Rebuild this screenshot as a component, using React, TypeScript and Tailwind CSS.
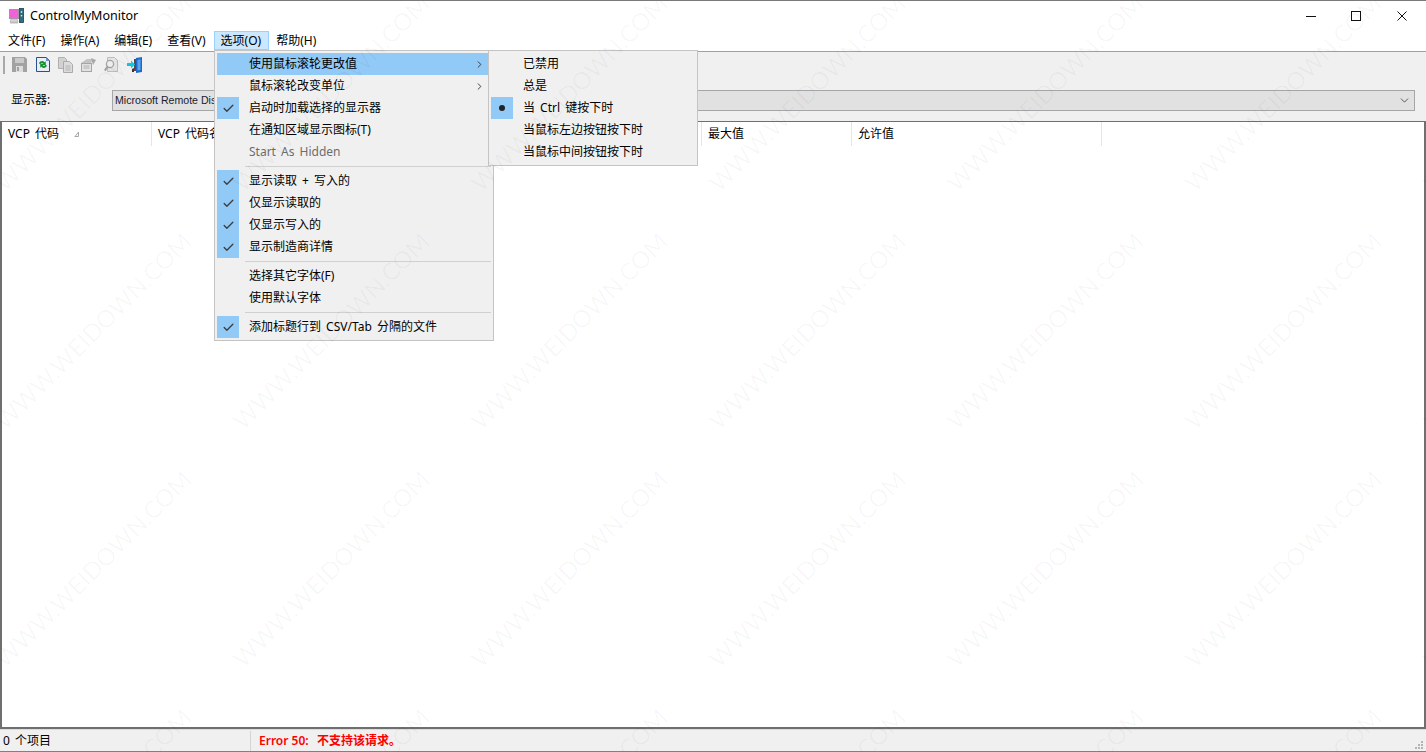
import type { ReactNode } from "react";
import { Check, ChevronRight, ChevronDown } from "lucide-react";

const menuBar = ["文件(F)", "操作(A)", "编辑(E)", "查看(V)", "选项(O)", "帮助(H)"];

const columns = [
  { label: "VCP 代码", width: "w-[150px]" },
  { label: "VCP 代码名称", width: "w-[150px]" },
  { label: "读写", width: "w-[150px]" },
  { label: "当前值", width: "w-[100px]" },
  { label: "最小值", width: "w-[150px]" },
  { label: "最大值", width: "w-[150px]" },
  { label: "允许值", width: "w-[250px]" },
];

const watermarkRows = [93, 331, 569, 807];
const watermarkCols = [93, 331, 569, 807, 1045, 1283, 1521];

function MenuRow({
  label,
  mark,
  arrow,
  active,
  disabled,
}: {
  label: string;
  mark?: "check" | "dot";
  arrow?: boolean;
  active?: boolean;
  disabled?: boolean;
}) {
  return (
    <div className={`flex h-[22px] items-center ${active ? "bg-[#91c9f7]" : ""}`}>
      <div className={`flex h-[22px] w-[22px] shrink-0 items-center justify-center ${mark ? "bg-[#91c9f7]" : ""}`}>
        {mark === "check" && <Check size={13} strokeWidth={2.4} className="text-[#3c3c3c]" />}
        {mark === "dot" && <div className="h-[6px] w-[6px] rounded-full bg-[#222222]" />}
      </div>
      <span className={`flex-1 whitespace-pre pl-[10px] [word-spacing:2px] ${disabled ? "text-[#6d6d6d]" : "text-black"}`}>{label}</span>
      {arrow && <ChevronRight size={11} strokeWidth={2} className="mr-[3px] text-[#333333]" />}
    </div>
  );
}

function Separator() {
  return (
    <div className="flex h-[7px] items-center pl-[28px]">
      <div className="h-px w-[246px] shrink-0 bg-[#d0d0d0]" />
    </div>
  );
}

function OptionsMenu() {
  return (
    <div className="absolute left-[214px] top-[49px] z-10 h-[291px] w-[280px] border border-[#c4c4c4] bg-[#f0f0f0] pl-[2px] pr-[5px] pt-[2px]">
      <MenuRow label="使用鼠标滚轮更改值" arrow active />
      <MenuRow label="鼠标滚轮改变单位" arrow />
      <MenuRow label="启动时加载选择的显示器" mark="check" />
      <MenuRow label="在通知区域显示图标(T)" />
      <MenuRow label="Start As Hidden" disabled />
      <Separator />
      <MenuRow label="显示读取 + 写入的" mark="check" />
      <MenuRow label="仅显示读取的" mark="check" />
      <MenuRow label="仅显示写入的" mark="check" />
      <MenuRow label="显示制造商详情" mark="check" />
      <Separator />
      <MenuRow label="选择其它字体(F)" />
      <MenuRow label="使用默认字体" />
      <Separator />
      <MenuRow label="添加标题行到 CSV/Tab 分隔的文件" mark="check" />
    </div>
  );
}

function WheelSubmenu() {
  return (
    <div className="absolute left-[488px] top-[49px] z-20 h-[116px] w-[210px] border border-[#c4c4c4] bg-[#f0f0f0] pl-[2px] pt-[2px]">
      <MenuRow label="已禁用" />
      <MenuRow label="总是" />
      <MenuRow label="当 Ctrl 键按下时" mark="dot" />
      <MenuRow label="当鼠标左边按钮按下时" />
      <MenuRow label="当鼠标中间按钮按下时" />
    </div>
  );
}

function ToolIcon({ children }: { children: ReactNode }) {
  return <div className="flex h-[18px] w-[23px] items-center justify-center">{children}</div>;
}

function AppIcon() {
  return (
    <svg width="15" height="16" viewBox="0 0 15 16">
      <rect x=".5" y="1.5" width="9" height="9" fill="#f062d8" stroke="#a88fa5" />
      <path d="M2 11h6l1 3H1z" fill="#d8d8d8" stroke="#a8a8a8" strokeWidth="0.6" />
      <path d="M1 14h8v1.5H1z" fill="#bcbcbc" />
      <rect x="10.5" y=".5" width="4" height="14" fill="#2f6f7d" stroke="#1d3f48" strokeWidth="0.8" />
      <rect x="11.8" y="3" width="1.4" height="2" fill="#9fe3ea" />
      <rect x="11.8" y="7" width="1.4" height="1.4" fill="#cfeff2" />
    </svg>
  );
}

function Toolbar() {
  return (
    <div className="flex h-[25px] items-center pl-[3px]">
      <div className="mr-[3px] h-[18px] w-[2px] bg-[#a8a8a8]" />
      <ToolIcon>
        <svg width="15" height="15" viewBox="0 0 15 15">
          <path d="M0 0h13l2 2v13H0z" fill="#a2a2a2" />
          <rect x="3" y="1" width="9" height="5" fill="#cacaca" />
          <rect x="4" y="9" width="7" height="6" fill="#dedede" />
          <rect x="5" y="10" width="2" height="4" fill="#a2a2a2" />
        </svg>
      </ToolIcon>
      <ToolIcon>
        <svg width="14" height="15" viewBox="0 0 14 15">
          <path d="M.5.5h10l3 3v11H.5z" fill="#e8eef8" stroke="#27518f" />
          <path d="M10 0l4 4h-4z" fill="#6c8fc4" />
          <path d="M3 6.5c.7-2.600 4-3.200 5.600-1.200l1.200-1.100v3.800H6l1.300-1.200c-.9-.9-2.300-.7-2.800.4z" fill="#17942f" />
          <path d="M11 8.500c-.7 2.600-4 3.200-5.600 1.200l-1.200 1.100V7h3.800L6.700 8.200c.9.9 2.300.7 2.800-.4z" fill="#17942f" />
        </svg>
      </ToolIcon>
      <ToolIcon>
        <svg width="15" height="16" viewBox="0 0 15 16">
          <path d="M.5.5h6l2 2v9H.5z" fill="#d2d2d2" stroke="#b0b0b0" />
          <path d="M5.500 4.500h6l3 3v8h-9z" fill="#dcdcdc" stroke="#aaaaaa" />
          <path d="M7.500 9h5M7.500 11h5M7.500 13h5" stroke="#b4b4b4" />
        </svg>
      </ToolIcon>
      <ToolIcon>
        <svg width="17" height="15" viewBox="0 0 17 15">
          <path d="M1 6l6-4h7l-3 4z" fill="#c4c4c4" />
          <path d="M11 1l5 2-3 5z" fill="#a9a9a9" />
          <rect x="1.500" y="6.500" width="10" height="8" fill="#e2e2e2" stroke="#a6a6a6" />
          <path d="M3.500 9h6M3.500 11h6" stroke="#b2b2b2" />
        </svg>
      </ToolIcon>
      <ToolIcon>
        <svg width="15" height="15" viewBox="0 0 15 15">
          <path d="M3.500.5h7l3 3v11h-10z" fill="#e4e4e4" stroke="#bcbcbc" />
          <circle cx="6" cy="7" r="3.600" fill="#eeeeee" stroke="#a4a4a4" strokeWidth="1.300" />
          <path d="M3.400 9.800L.8 13.600" stroke="#a0a0a0" strokeWidth="2" />
        </svg>
      </ToolIcon>
      <ToolIcon>
        <svg width="16" height="16" viewBox="0 0 16 16">
          <path d="M9 1l6-1v15l-6 1z" fill="#2268c8" />
          <path d="M7 2h2v12H7z" fill="#5c4a3c" />
          <path d="M10.500 3l3-.7v10.600l-3 .7z" fill="#57a6ef" />
          <path d="M0 6h4V3.500L8 7.500l-4 4V9H0z" fill="#12c6e6" />
          <path d="M7 11v4H5v-3z" fill="#42352c" />
        </svg>
      </ToolIcon>
    </div>
  );
}

export default function App() {
  return (
    <div className="relative flex h-[752px] w-[1426px] flex-col overflow-hidden border-t border-[#7a7a7a] bg-[#f0f0f0] font-['Noto_Sans','Noto_Sans_CJK_SC',sans-serif] text-[12px] text-black">
      <div className="flex h-[29px] items-center bg-white pl-[9px]">
        <AppIcon />
        <span className="ml-[6px] mt-[1px] flex-1 text-[12.5px] leading-none">ControlMyMonitor</span>
        <div className="flex h-full w-[46px] items-center justify-center">
          <svg width="10" height="10" viewBox="0 0 10 10">
            <path d="M0 5.500h10" stroke="#111111" />
          </svg>
        </div>
        <div className="flex h-full w-[46px] items-center justify-center">
          <svg className="mr-[2px]" width="10" height="10" viewBox="0 0 10 10">
            <rect x=".5" y=".5" width="9" height="9" fill="none" stroke="#111111" />
          </svg>
        </div>
        <div className="flex h-full w-[46px] items-center justify-center">
          <svg className="mr-[2px]" width="10" height="10" viewBox="0 0 10 10">
            <path d="M.5.5l9 9M9.500.5l-9 9" stroke="#111111" />
          </svg>
        </div>
      </div>

      <div className="flex h-[21px] items-center bg-white pl-px">
        {menuBar.map((item) => (
          <div
            key={item}
            className={`flex h-[19px] items-center border pl-[6px] pr-[7px] ${
              item === "选项(O)" ? "border-[#99d1ff] bg-[#cce8ff]" : "border-transparent"
            }`}
          >
            {item}
          </div>
        ))}
      </div>

      <div className="h-px bg-[#a0a0a0]" />
      <Toolbar />

      <div className="flex h-[44px] items-start pl-[11px] pt-[13px]">
        <span className="w-[101px] leading-[20px]">显示器:</span>
        <div className="flex h-[21px] w-[1303px] items-center border border-[#a6a6a6] bg-[#e1e1e1] pl-[2px] pr-[2px] font-['Liberation_Sans','Noto_Sans_CJK_SC',sans-serif] text-[10.6px] text-[#1a1a2a]">
          <span className="flex-1">Microsoft Remote Display Adapter</span>
          <ChevronDown size={13} strokeWidth={1.6} className="mr-px text-[#444444]" />
        </div>
      </div>

      <div className="flex min-h-0 flex-1 flex-col border-b-2 border-l-2 border-r-2 border-t border-[#6f6f6f] bg-white">
        <div className="flex h-[24px]">
          {columns.map((col, i) => (
            <div key={col.label} className={`relative flex items-center border-r border-[#e5e5e5] pl-[6px] [word-spacing:2px] ${col.width}`}>
              {col.label}
              {i === 0 && (
                <svg className="absolute left-[72px] top-[9px]" width="6" height="6" viewBox="0 0 6 6">
                  <path d="M.5 5.500h4V1M4.500 1L1.500 5" fill="none" stroke="#a8a8a8" />
                </svg>
              )}
            </div>
          ))}
        </div>
      </div>

      <div className="relative flex h-[23px] border-b border-t border-b-[#808080] border-t-[#dcdcdc] bg-[#f0f0f0]">
        <div className="mt-[1px] flex w-[251px] items-center border-r border-[#d4d4d4] pl-[3px] [word-spacing:2px]">0 个项目</div>
        <div className="flex items-center pl-[8px] font-bold text-[#ff0000]">
          <span className="w-[58px] font-semibold">Error 50:</span>
          <span>不支持该请求。</span>
        </div>
        <svg className="absolute bottom-[1px] right-[2px]" width="9" height="9" viewBox="0 0 9 9">
          <path d="M6 0h2v2H6zM3 3h2v2H3zM6 3h2v2H6zM0 6h2v2H0zM3 6h2v2H3zM6 6h2v2H6z" fill="#b4b4b4" />
        </svg>
      </div>

      <OptionsMenu />
      <WheelSubmenu />

      {/* site watermark laid over the whole capture */}
      <div className="pointer-events-none absolute inset-0 z-30 overflow-hidden">
        {watermarkRows.map((y) =>
          watermarkCols.map((x) => (
            <span
              key={`${x}-${y}`}
              className="absolute -translate-x-1/2 -translate-y-1/2 -rotate-45 whitespace-nowrap font-['Lato',sans-serif] text-[24px] font-normal text-[#000000]/[0.032]"
              style={{ left: x, top: y - 1 }}
            >
              WWW.WEIDOWN.COM
            </span>
          )),
        )}
      </div>
    </div>
  );
}
